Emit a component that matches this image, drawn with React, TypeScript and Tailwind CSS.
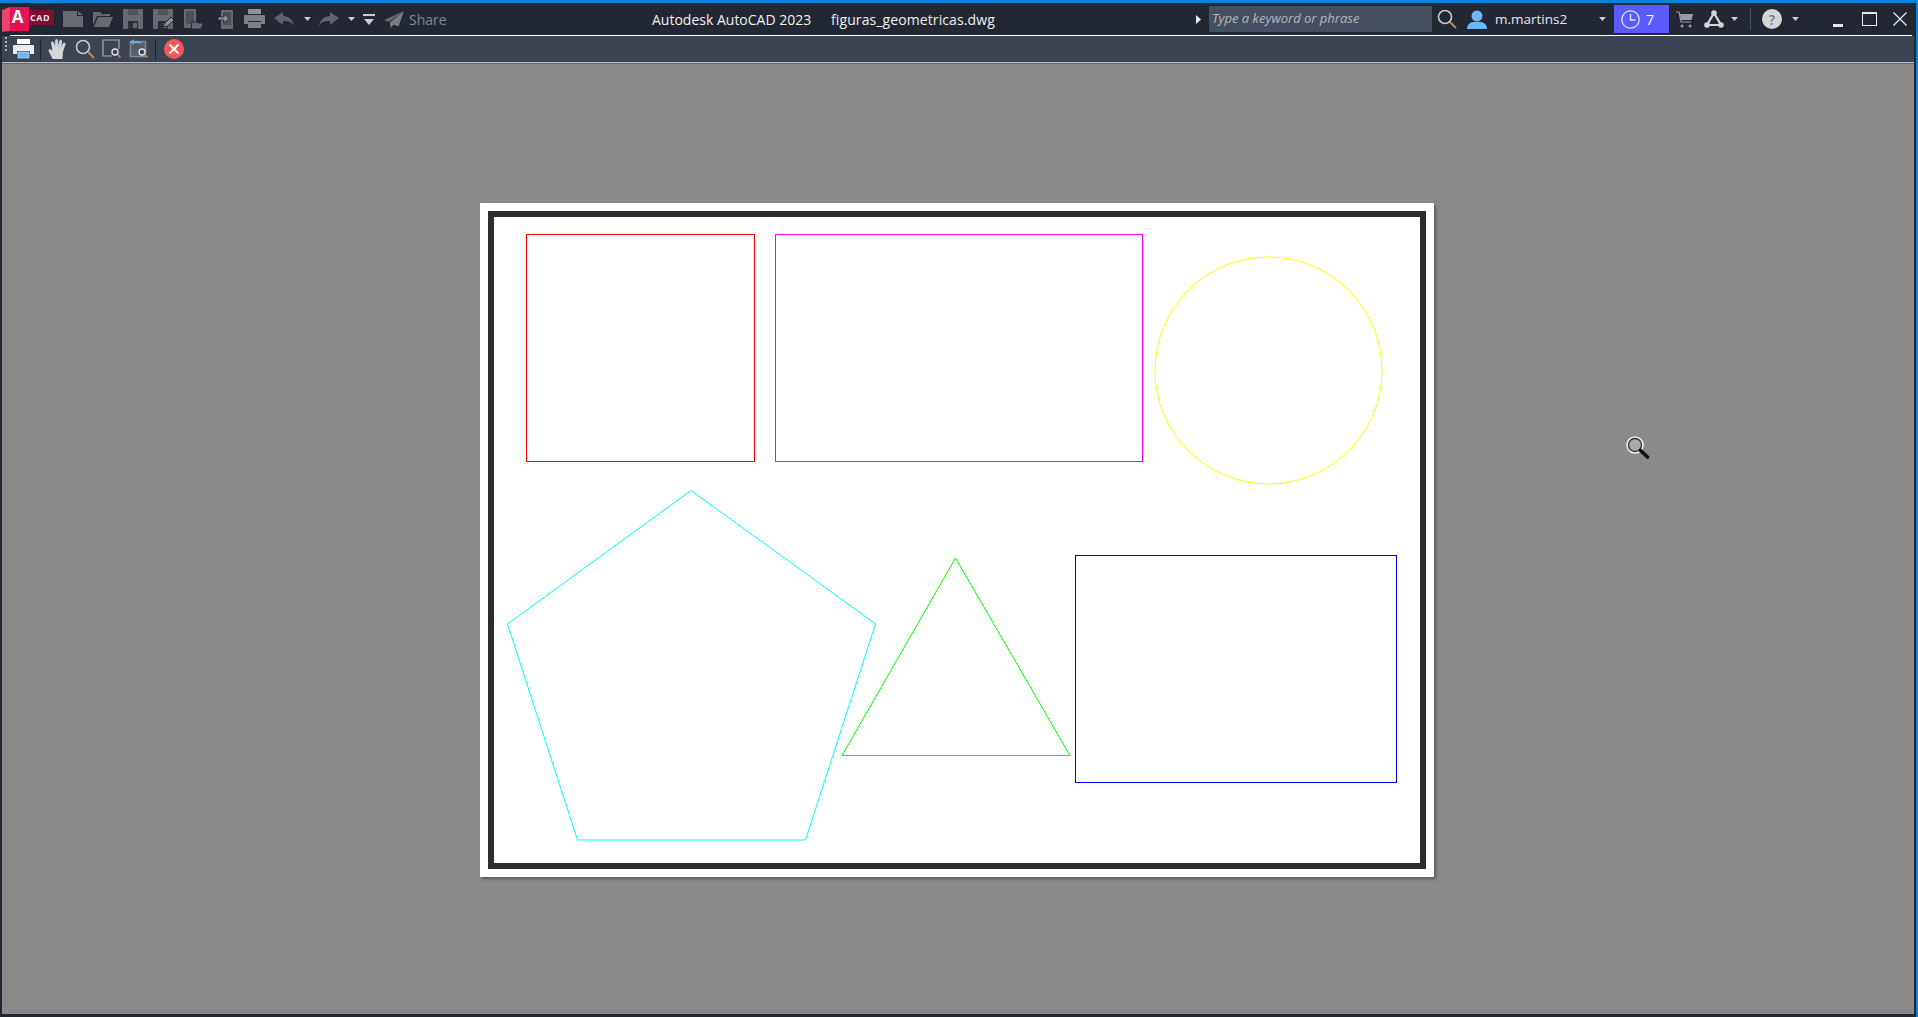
import type { ReactNode } from 'react';

const ICON = '#66696f';

function Caret({ color = '#c9ccd1' }: { color?: string }) {
  return (
    <svg width="7" height="4" viewBox="0 0 7 4" className="shrink-0">
      <path d="M0 0h7L3.5 4z" fill={color} />
    </svg>
  );
}

function Box({ w, ml, children }: { w: string; ml: string; children: ReactNode }) {
  return <div className={`flex items-center justify-center shrink-0 ${w} ${ml}`}>{children}</div>;
}

function Logo() {
  return (
    <svg width="52" height="26" viewBox="0 0 52 26">
      <path d="M0 4 8 1v24l-8 1z" fill="#ee3f6e" />
      <rect x="8" y="1" width="19" height="24" fill="#e2134f" />
      <rect x="27" y="4" width="25" height="15" fill="#7d0f33" />
      <text x="15.500" y="17" textAnchor="middle" fontSize="17" fontWeight="700" fill="#fff">A</text>
      <text x="38" y="15" textAnchor="middle" fontSize="9" fontWeight="700" letterSpacing="0.500" fill="#f4dce4">CAD</text>
    </svg>
  );
}

function NewFile() {
  return (
    <svg width="20" height="16" viewBox="0 0 20 16">
      <path d="M0 0h14v5h6v11H0z" fill={ICON} />
      <path d="M15 0l5 4h-5z" fill={ICON} />
    </svg>
  );
}

function OpenFolder() {
  return (
    <svg width="20" height="16" viewBox="0 0 20 16">
      <path d="M0 1h7l2 2h8v2H4L0 14z" fill={ICON} />
      <path d="M5 6h15l-4 10H1z" fill={ICON} />
    </svg>
  );
}

function Floppy({ pen = false }: { pen?: boolean }) {
  return (
    <svg width="21" height="20" viewBox="0 0 21 20">
      <path d="M0 0h20v20H0z" fill={ICON} />
      <rect x="5" y="0" width="10" height="6" fill="#50535a" />
      <rect x="5" y="12" width="10" height="8" fill="#2a2e37" />
      <rect x="10" y="14" width="4" height="5" fill={ICON} />
      {pen && <path d="M10 18l2-4 6-6 3 3-6 6z" fill="#8a8d92" stroke="#222833" strokeWidth="1" />}
    </svg>
  );
}

function DeviceFolder() {
  return (
    <svg width="20" height="20" viewBox="0 0 20 20">
      <rect x="0" y="0" width="12" height="19" rx="1" fill={ICON} />
      <rect x="2" y="2" width="8" height="13" fill="#4d5057" />
      <path d="M8 13h5l1 1h5v1l-2 5H7z" fill={ICON} stroke="#222833" strokeWidth="1" />
    </svg>
  );
}

function DeviceArrow() {
  return (
    <svg width="15" height="19" viewBox="0 0 15 19">
      <rect x="3" y="0" width="12" height="19" rx="1" fill={ICON} />
      <rect x="5" y="2" width="8" height="13" fill="#4d5057" />
      <path d="M0 7h6V4l5 4.500L6 13v-3H0z" fill="#8a8d92" stroke="#222833" strokeWidth="0.7" />
    </svg>
  );
}

function Printer({ light = false }: { light?: boolean }) {
  const body = light ? '#e8eaec' : '#7c7f85';
  return (
    <svg width="21" height="20" viewBox="0 0 21 20">
      <rect x="4" y="0" width="13" height="5" fill={light ? '#fff' : '#8f9297'} />
      <path d="M1 6h19a1 1 0 0 1 1 1v8h-4v-3H4v3H0V7a1 1 0 0 1 1-1z" fill={body} />
      {light ? (
        <rect x="5" y="13" width="11" height="6" fill="#6bb8ee" stroke="#e8eaec" strokeWidth="0.6" />
      ) : (
        <rect x="4" y="13" width="13" height="6" fill="#7c7f85" />
      )}
    </svg>
  );
}

function Arrow({ flip = false }: { flip?: boolean }) {
  return (
    <svg width="20" height="14" viewBox="0 0 20 14" className={flip ? '-scale-x-100' : ''}>
      <path d="M0 6 9 0v4c6 0 10 4 11 10-2-4-6-5-11-5v4z" fill="#5f6268" />
    </svg>
  );
}

function Send() {
  return (
    <svg width="20" height="17" viewBox="0 0 20 17">
      <path d="M20 0 0 9l5 2z" fill={ICON} />
      <path d="M20 0 6 11.500 6.500 17l3-3.500 5 2z" fill="#7a7d82" />
    </svg>
  );
}

function Glass() {
  return (
    <svg width="20" height="20" viewBox="0 0 20 20">
      <circle cx="8" cy="8" r="6.500" fill="none" stroke="#c9cbce" strokeWidth="1.600" />
      <path d="M13 13l6 6" stroke="#c08a4e" strokeWidth="2" />
    </svg>
  );
}

function User() {
  return (
    <svg width="20" height="19" viewBox="0 0 20 19">
      <circle cx="10" cy="6" r="5.500" fill="#6cb9f5" />
      <path d="M0 19c0-5 4-6.500 6-7h8c2 .5 6 2 6 7z" fill="#6cb9f5" />
    </svg>
  );
}

function Clock() {
  return (
    <svg width="19" height="19" viewBox="0 0 19 19" fill="none" stroke="#e8e8ff" strokeWidth="1.300">
      <circle cx="9.500" cy="9.500" r="8.700" />
      <path d="M9.500 4v6h5" />
    </svg>
  );
}

function Cart() {
  return (
    <svg width="17" height="17" viewBox="0 0 17 17">
      <path d="M0 1h3l2 10h10" fill="none" stroke="#9a9da2" strokeWidth="1.200" />
      <path d="M4 3h13l-1.500 6H5z" fill="#9a9da2" />
      <circle cx="6" cy="15" r="1.500" fill="#9a9da2" />
      <circle cx="14" cy="15" r="1.500" fill="#9a9da2" />
    </svg>
  );
}

function Connect() {
  return (
    <svg width="20" height="18" viewBox="0 0 20 18">
      <path d="M10 3 3 15h14z" fill="none" stroke="#d4d5d7" strokeWidth="2.200" />
      <circle cx="10" cy="3" r="2.800" fill="#d4d5d7" />
      <circle cx="3" cy="15" r="2.800" fill="#d4d5d7" />
      <circle cx="17" cy="15" r="2.800" fill="#d4d5d7" />
    </svg>
  );
}

function Hand() {
  return (
    <svg width="20" height="20" viewBox="0 0 20 20">
      <path
        d="M5 20 1 12c-.6-1.400 1-2 2-1l2 2L3.500 4c-.2-1.400 1.700-1.700 2-.3L7 9 7.500 1.500c.1-1.500 2-1.500 2.100 0L10 9l1.700-7c.3-1.400 2.200-1 2 .4L12.500 10l2.800-5.500c.6-1.200 2.300-.5 1.800.8L14.500 13 14 20z"
        fill="#d6d7d9"
        stroke="#d6d7d9"
        strokeWidth="0.8"
      />
    </svg>
  );
}

function ZoomWindow() {
  return (
    <svg width="20" height="20" viewBox="0 0 20 20" fill="none">
      <path d="M10 17H1V1h16v9" stroke="#a9acb1" strokeWidth="1.200" />
      <circle cx="13" cy="13" r="3" stroke="#e4e5e7" strokeWidth="1.300" />
      <path d="M15.500 15.500l3 3" stroke="#c08a4e" strokeWidth="1.600" />
    </svg>
  );
}

function ZoomPrevious() {
  return (
    <svg width="20" height="20" viewBox="0 0 20 20" fill="none">
      <rect x="1.500" y="2.500" width="15" height="15" fill="#565b66" stroke="#878a90" strokeWidth="1.500" />
      <path d="M1 3l4-3v2c4 0 7 .5 8 3-2-1-4-1-8-1v2z" fill="#5fb2ee" />
      <circle cx="13" cy="13" r="3" fill="#3b4453" stroke="#e4e5e7" strokeWidth="1.300" />
      <path d="M15.500 15.500l3 3" stroke="#c08a4e" strokeWidth="1.600" />
    </svg>
  );
}

function CloseCircle() {
  return (
    <svg width="20" height="20" viewBox="0 0 20 20">
      <circle cx="10" cy="10" r="10" fill="#f4575a" />
      <path d="M5.500 5.500l9 9M14.500 5.500l-9 9" stroke="#fff" strokeWidth="1.800" />
    </svg>
  );
}

function Cursor() {
  return (
    <svg width="26" height="26" viewBox="0 0 26 26">
      <circle cx="10" cy="10" r="8" fill="#a9a9a9" stroke="#f2f2f2" strokeWidth="1.500" />
      <circle cx="10" cy="10" r="6.500" fill="none" stroke="#333" strokeWidth="1.300" />
      <path d="M15.500 15.500l7 6.500" stroke="#111" strokeWidth="3.600" strokeLinecap="round" />
    </svg>
  );
}

// plotted sheet, coordinates are sheet pixels
function Drawing() {
  return (
    <svg width="954" height="674" viewBox="0 0 954 674" className="block" fill="none" strokeWidth="1">
      <rect x="11" y="11" width="932" height="652" stroke="#2d2d2d" strokeWidth="6" />
      <rect x="46.500" y="31.500" width="228" height="227" stroke="#ff0000" />
      <rect x="295.500" y="31.500" width="367" height="227" stroke="#ff00ff" />
      <circle cx="788.500" cy="167.500" r="113.500" stroke="#ffff00" />
      <path d="M211 287.500 395.500 421 325.500 637H97.500L27.500 421z" stroke="#00ffff" />
      <path d="M475.500 355 590 552.500H362z" stroke="#00ff00" />
      <rect x="595.500" y="352.500" width="321" height="227" stroke="#0000ff" />
    </svg>
  );
}

export default function App() {
  return (
    <div
      className="w-[1918px] h-[1017px] flex flex-col overflow-hidden bg-[#222833] relative border-r-2 border-[#0a84d6]"
      style={{ fontFamily: '"Open Sans", "Noto Sans", sans-serif' }}
    >
      <div className="h-[3px] shrink-0 bg-[#0a84d6]" />

      {/* title bar */}
      <div className="h-[32px] shrink-0 flex items-center text-[13.5px] text-[#e6e7e9]">
        <Box w="w-[52px]" ml="ml-[2px]"><Logo /></Box>
        <Box w="w-[20px]" ml="ml-[9px]"><NewFile /></Box>
        <Box w="w-[20px]" ml="ml-[10px]"><OpenFolder /></Box>
        <Box w="w-[21px]" ml="ml-[10px]"><Floppy /></Box>
        <Box w="w-[21px]" ml="ml-[9px]"><Floppy pen /></Box>
        <Box w="w-[20px]" ml="ml-[10px]"><DeviceFolder /></Box>
        <Box w="w-[15px]" ml="ml-[14px]"><DeviceArrow /></Box>
        <Box w="w-[21px]" ml="ml-[11px]"><Printer /></Box>
        <Box w="w-[20px]" ml="ml-[9px]"><Arrow /></Box>
        <Box w="w-[7px]" ml="ml-[10px]"><Caret /></Box>
        <Box w="w-[20px]" ml="ml-[8px]"><Arrow flip /></Box>
        <Box w="w-[7px]" ml="ml-[9px]"><Caret /></Box>
        <Box w="w-[12px]" ml="ml-[8px]">
          <svg width="12" height="11" viewBox="0 0 12 11">
            <rect width="12" height="2" fill="#c9ccd1" />
            <path d="M1 5h10l-5 6z" fill="#c9ccd1" />
          </svg>
        </Box>
        <Box w="w-[20px]" ml="ml-[9px]"><Send /></Box>
        <span className="ml-[5px] w-[38px] text-[#7f8a96] text-[14px]">Share</span>

        <div className="ml-[205px] w-[347px] flex shrink-0 text-[14px] text-[#f0f0f0] whitespace-nowrap">
          <span className="w-[179px]">Autodesk AutoCAD 2023</span>
          <span className="tracking-[0.1px]">figuras_geometricas.dwg</span>
        </div>

        <svg width="5" height="9" viewBox="0 0 5 9" className="ml-[197px] shrink-0">
          <path d="M0 0l5 4.500L0 9z" fill="#e6e7e9" />
        </svg>
        <div className="ml-[8px] w-[223px] h-[26px] shrink-0 flex items-center px-[3px] bg-[#464f60] italic text-[13px] text-[#b4b8bf]">
          Type a keyword or phrase
        </div>
        <Box w="w-[20px]" ml="ml-[5px]"><Glass /></Box>
        <Box w="w-[20px]" ml="ml-[10px]"><User /></Box>
        <span className="ml-[8px] w-[104px] shrink-0 text-[13.5px]">m.martins2</span>
        <Caret />
        <div className="ml-[8px] w-[55px] h-[28px] shrink-0 flex items-center pl-[7px] gap-[6px] bg-[#5b5bff] text-[14px] text-white">
          <Clock />
          <span>7</span>
        </div>
        <Box w="w-[17px]" ml="ml-[7px]"><Cart /></Box>
        <Box w="w-[20px]" ml="ml-[11px]"><Connect /></Box>
        <Box w="w-[7px]" ml="ml-[7px]"><Caret /></Box>
        <div className="ml-[12px] w-px h-[22px] bg-[#4a505c] shrink-0" />
        <div className="ml-[11px] w-[20px] h-[20px] shrink-0 rounded-full bg-[#d4d5d7] flex items-center justify-center text-[14px] font-semibold text-[#777]">
          ?
        </div>
        <Box w="w-[7px]" ml="ml-[10px]"><Caret /></Box>
        <div className="ml-[34px] mt-[12px] w-[10px] h-[3px] shrink-0 bg-[#e6e7e9]" />
        <div className="ml-[19px] w-[15px] h-[14px] shrink-0 border border-t-2 border-[#e6e7e9]" />
        <svg width="14" height="14" viewBox="0 0 14 14" className="ml-[16px] shrink-0">
          <path d="M.5.500l13 13M13.500.500l-13 13" stroke="#e6e7e9" strokeWidth="1.300" />
        </svg>
      </div>

      {/* plot preview toolbar */}
      <div className="h-px shrink-0 ml-[10px] mr-[4px] bg-white" />
      <div className="h-[26px] shrink-0 mx-[2px] flex items-center bg-[#3b4453] relative">
        <div className="absolute left-[3px] top-[1px] h-[14px] border-l-2 border-dotted border-[#aeb2b8]" />
        <Box w="w-[21px]" ml="ml-[11px]"><Printer light /></Box>
        <div className="ml-[6px] w-px h-[21px] bg-[#1f242d]" />
        <Box w="w-[20px]" ml="ml-[7px]"><Hand /></Box>
        <Box w="w-[20px]" ml="ml-[7px]"><Glass /></Box>
        <Box w="w-[20px]" ml="ml-[7px]"><ZoomWindow /></Box>
        <Box w="w-[20px]" ml="ml-[7px]"><ZoomPrevious /></Box>
        <div className="ml-[6px] w-px h-[21px] bg-[#1f242d]" />
        <Box w="w-[20px]" ml="ml-[8px]"><CloseCircle /></Box>
      </div>
      <div className="h-px shrink-0 mx-[2px] bg-[#b9bcc0]" />
      <div className="h-px shrink-0 mx-[2px] bg-[#6a6a6a]" />

      {/* preview area */}
      <div className="flex-1 mx-[2px] mb-[3px] bg-[#8a8a8a] flex items-center justify-center relative">
        <div className="w-[954px] h-[674px] mt-[2px] mr-[2px] bg-white shadow-[2px_2px_3px_rgba(0,0,0,0.35)]">
          <Drawing />
        </div>
        <div className="absolute left-[1623px] top-[371px]">
          <Cursor />
        </div>
      </div>
    </div>
  );
}
